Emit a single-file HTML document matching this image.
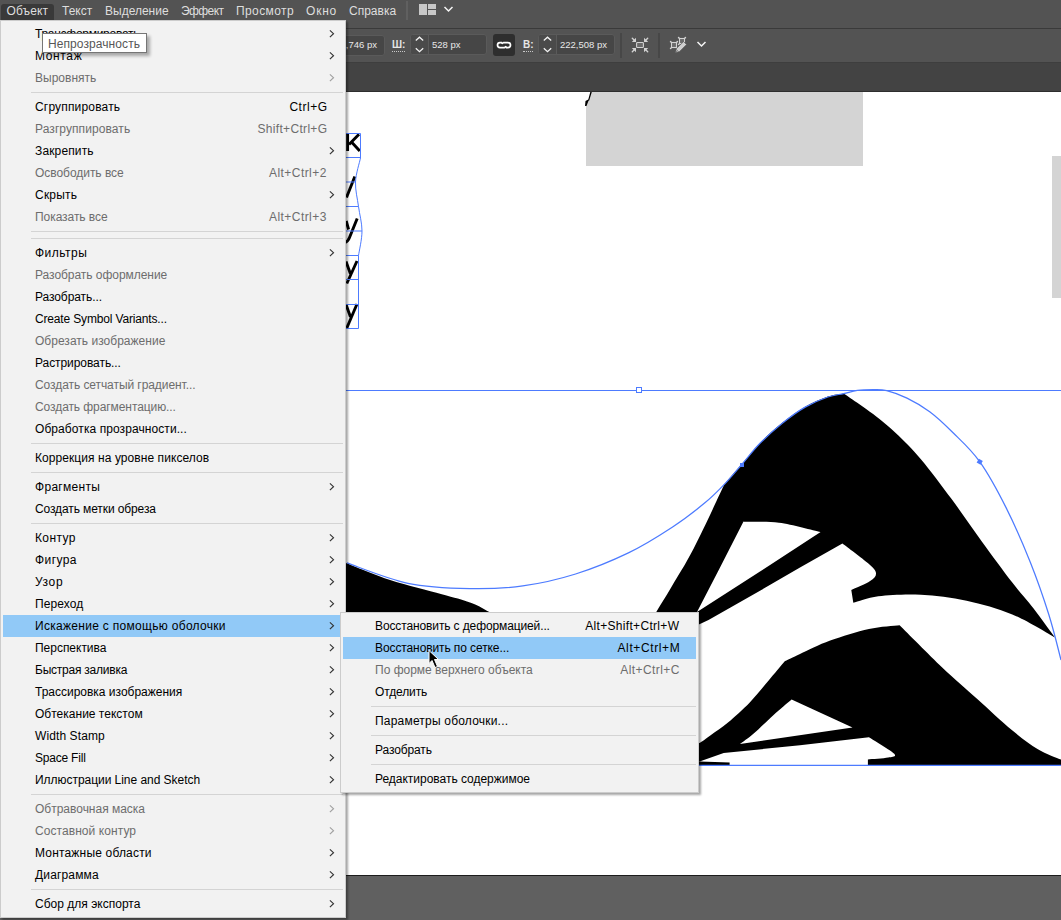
<!DOCTYPE html>
<html><head><meta charset="utf-8">
<style>
*{margin:0;padding:0;box-sizing:border-box}
html,body{width:1061px;height:920px;overflow:hidden;background:#535353;font-family:"Liberation Sans",sans-serif;font-size:12px}
.abs{position:absolute}
#menubar{left:0;top:0;width:1061px;height:28px;background:#535353}
#line1{left:0;top:28px;width:1061px;height:1px;background:#3a3a3a}
#ctrl{left:0;top:29px;width:1061px;height:33px;background:#535353}
#line2{left:0;top:62px;width:1061px;height:1px;background:#3e3e3e}
#tabs{left:0;top:63px;width:1061px;height:28px;background:#434343}
#line3{left:0;top:91px;width:1061px;height:1px;background:#2e2e2e}
#canvas{left:0;top:92px;width:1061px;height:783px;background:#fff;overflow:hidden}
#line4{left:0;top:875px;width:1061px;height:1px;background:#1c1c1c}
#bottom{left:0;top:876px;width:1061px;height:44px;background:#606060}
.mb{top:3px;height:17px;line-height:17px;color:#dedede;white-space:nowrap}
.mbsel{left:1px;top:4px;width:53px;height:16px;background:#393939;border-radius:3px 3px 0 0}
.fld{background:#464646;border:1px solid #5a5a5a;border-radius:3px}
.ftxt{color:#e8e8e8;font-size:9.5px;white-space:nowrap;line-height:12px}
.lbl{color:#e6e6e6;font-size:10px;font-weight:bold;line-height:12px;border-bottom:1px dotted #c8c8c8}
.sep{background:#474747;width:2px}
/* menus */
.menu{background:#f2f2f2;border:1px solid #cccccc;box-shadow:2px 2px 2px rgba(0,0,0,0.35)}
.it{position:absolute;left:2px;right:2px;height:22px;line-height:22px;white-space:nowrap;color:#000}
.it .t{position:absolute;left:32px;top:0}
.it .k{position:absolute;top:0}
.it.dis{color:#6d6d6d}
.it.hl{background:#91c9f7}
.arr{position:absolute;top:6px;width:7px;height:9px}
.hs{position:absolute;left:30px;right:2px;height:1px;background:#d4d4d4}
</style></head><body>
<div id="menubar" class="abs"></div>
<div id="line1" class="abs"></div>
<div id="ctrl" class="abs"></div>
<div id="line2" class="abs"></div>
<div id="tabs" class="abs"></div>
<div id="line3" class="abs"></div>
<div id="canvas" class="abs">
</div>
<svg class="abs" style="left:0;top:0" width="1061" height="920" viewBox="0 0 1061 920"><defs><clipPath id="cv"><rect x="0" y="92" width="1061" height="783"/></clipPath></defs><g clip-path="url(#cv)"><path d="M591.5 92 H863 V166 H586 V106 Z" fill="#d4d4d4"/>
<path d="M590.3 92 L591.8 92 L589.2 100.5 L588.5 100.8 L586.5 106 L585 106 L585.5 101 L588.3 99.5 Z" fill="#000"/>
<rect x="1052" y="156" width="9" height="142" fill="#d4d4d4"/>
<g fill="none" stroke="#000" stroke-width="2.9"><path d="M347.6 134 V151"/><path d="M349 144.5 L359 134.3 M351.5 142 L359.8 151"/><path d="M354.8 176.5 L346.5 197.5"/><path d="M357.2 218.5 L349.5 237.5 Q348 241.5 345 242.5"/><path d="M346.2 221 L348.6 229.5"/><path d="M357 261 L346.8 283.5"/><path d="M346 261.5 L350.5 274"/><path d="M357 304 L346.8 328"/><path d="M346 304.5 L350.5 317"/></g>
<path d="M346 133.5 H360.5 V158 C359.7 162.0 355.8 173.9 355.5 182.0 C355.2 190.1 357.4 198.3 358.5 206.5 C359.6 214.7 362.0 222.8 362.0 231.0 C362.0 239.2 359.1 251.4 358.5 255.5 V328.5 H346" fill="none" stroke="#4d7bff" stroke-width="1"/>
<line x1="346" y1="157.5" x2="360.5" y2="157.5" stroke="#4d7bff" stroke-width="1"/>
<line x1="346" y1="182" x2="355.5" y2="182" stroke="#4d7bff" stroke-width="1"/>
<line x1="346" y1="206.5" x2="358.5" y2="206.5" stroke="#4d7bff" stroke-width="1"/>
<line x1="346" y1="231" x2="362" y2="231" stroke="#4d7bff" stroke-width="1"/>
<line x1="346" y1="255.5" x2="358.5" y2="255.5" stroke="#4d7bff" stroke-width="1"/>
<line x1="346" y1="279.5" x2="358.5" y2="279.5" stroke="#4d7bff" stroke-width="1"/>
<line x1="346" y1="304.5" x2="358.5" y2="304.5" stroke="#4d7bff" stroke-width="1"/>
<path d="M724.8 483.9 C727.6 480.4 735.9 470.9 741.8 464.1 C747.7 457.3 753.2 449.8 760.0 442.9 C766.8 436.0 775.1 428.6 782.6 422.6 C790.1 416.6 797.7 411.0 805.2 406.7 C812.8 402.4 821.5 398.8 827.9 396.6 C834.3 394.4 841.1 393.9 843.7 393.4 C848.6 396.8 864.4 407.4 873.1 414.0 C881.8 420.6 887.7 425.5 895.7 433.0 C903.7 440.5 911.6 448.2 920.9 459.2 C930.2 470.2 941.2 485.1 951.4 498.8 C961.5 512.5 971.6 527.4 981.8 541.4 C991.9 555.4 1003.7 571.3 1012.3 582.5 C1020.9 593.7 1026.5 599.2 1033.6 608.4 C1040.7 617.6 1051.4 632.6 1055.0 637.5 C1047.9 633.7 1027.0 620.6 1012.3 614.5 C997.6 608.4 981.8 604.1 966.6 600.8 C951.4 597.5 935.6 595.5 920.9 594.7 C906.2 593.9 889.6 594.9 878.3 596.2 C867.0 597.6 857.5 601.7 853.3 602.8 L851.3 590.0 C854.4 588.5 866.0 583.8 870.1 581.0 C874.2 578.2 876.3 576.1 876.0 573.1 C875.7 570.1 873.7 568.2 868.1 563.2 C862.5 558.2 846.7 546.7 842.4 543.4 L800.0 567.5 L760.0 590.7 L708.5 620.0 L698.9 624.6 L640.0 660.0 L600.0 660.0 L640.0 625.0 L650.0 625.0 L656.3 611.9 C658.9 607.6 665.8 596.6 672.0 586.0 C678.2 575.4 685.0 565.4 693.8 548.3 C702.6 531.2 719.6 494.4 724.8 483.6 Z" fill="#000"/>
<path d="M742.5 521.7 C748.6 521.9 766.0 521.0 779.0 522.7 C792.0 524.4 813.7 530.5 820.6 532.0 L760.0 571.5 L697.0 611.9 L719.9 567.8 L743.5 521.4 Z" fill="#fff"/>
<path d="M785 661.1 C787.5 659.9 792.5 657.3 800.0 653.9 C807.5 650.5 818.7 644.8 830.2 640.6 C841.7 636.5 857.3 631.6 868.9 629.0 C880.5 626.4 894.5 625.8 899.6 625.2 C906.7 632.2 929.3 655.1 942.2 667.4 C955.1 679.6 965.4 688.3 977.0 698.7 C988.6 709.1 1001.6 721.6 1011.8 730.0 C1021.9 738.4 1029.7 744.3 1037.9 749.2 C1046.1 754.1 1057.2 757.9 1061.0 759.6 L1061.0 765.0 L867.9 765.0 L867.9 759.4 C871.3 759.1 883.9 758.5 888.2 757.5 C892.6 756.5 897.2 757.0 894.0 753.6 C890.8 750.2 873.1 739.9 868.9 737.2 L800.0 745.2 L723.7 753.0 L699.6 761.5 L690.0 763.0 L640.0 765.0 L640.0 740.0 L699.6 742.9 C701.5 741.9 706.3 738.5 711.0 735.0 C715.7 731.5 721.5 728.0 728.0 722.5 C734.5 717.0 743.3 709.1 750.0 702.2 C756.7 695.3 762.2 688.1 768.0 681.3 C773.8 674.4 782.2 664.5 785.0 661.1 Z" fill="#000"/>
<path d="M791.6 699.5 L852.5 727.5 L740 743.9 C742.3 742.2 748.2 738.3 753.7 733.5 C759.2 728.7 767.0 720.9 773.3 715.2 C779.6 709.5 788.5 702.1 791.6 699.5 Z" fill="#fff"/>
<path d="M690 761 L699.6 761.5 L729.6 762.6 L729.6 765 L690 765 Z" fill="#000"/>
<path d="M346 563 C353.5 565.9 374.9 575.1 390.9 580.3 C406.9 585.5 428.6 590.6 441.8 594.3 C455.0 598.0 462.1 599.5 470.0 602.5 C477.9 605.5 481.0 607.2 489.3 612.1 C497.6 617.0 514.9 628.7 520.0 632.0 L346 640 Z" fill="#000"/>
<path d="M346.8 562.9 C357.0 566.3 387.4 579.0 407.9 583.3 C428.4 587.6 450.9 588.2 470.0 588.6 C489.1 589.0 505.2 588.3 522.8 585.9 C540.4 583.5 558.0 579.5 575.6 574.0 C593.2 568.5 612.2 560.7 628.4 552.9 C644.6 545.1 659.8 535.4 672.6 527.0 C685.4 518.6 696.5 509.8 705.2 502.6 C713.9 495.4 718.7 490.2 724.8 483.9 C730.9 477.5 735.9 471.3 741.8 464.5 C747.7 457.7 753.2 450.2 760.0 443.3 C766.8 436.4 775.1 429.0 782.6 423.0 C790.1 417.0 797.7 411.4 805.2 407.1 C812.8 402.8 821.5 399.2 827.9 397.0 C834.3 394.8 838.8 394.7 843.7 393.6 C848.6 392.5 852.4 391.1 857.3 390.4 C862.2 389.7 868.2 389.6 873.1 389.6 C878.0 389.6 881.1 389.2 886.7 390.6 C892.4 392.0 899.8 394.6 907.0 398.1 C914.2 401.6 922.2 406.1 929.7 411.7 C937.2 417.3 944.0 423.7 952.3 432.0 C960.6 440.3 970.5 448.8 979.5 461.4 C988.5 474.0 997.7 491.0 1006.2 507.9 C1014.7 524.8 1023.4 544.9 1030.5 562.7 C1037.6 580.5 1043.7 598.3 1048.8 614.5 C1053.9 630.7 1059.0 652.4 1061.0 660.0" fill="none" stroke="#4d7bff" stroke-width="1.25"/>
<line x1="346" y1="390.5" x2="1061" y2="390.5" stroke="#4d7bff" stroke-width="1"/>
<line x1="690" y1="765.3" x2="1061" y2="765.3" stroke="#4d7bff" stroke-width="1.3"/>
<rect x="636.5" y="387.5" width="5" height="5" fill="#fff" stroke="#4d7bff" stroke-width="1"/>
<rect x="740" y="463" width="4" height="4" fill="#4d7bff"/>
<rect x="977.5" y="459.5" width="4.5" height="4.5" fill="#4d7bff" transform="rotate(30 979.7 461.7)"/></g></svg>
<div id="line4" class="abs"></div>
<div id="bottom" class="abs"></div>

<!-- menubar items -->
<div class="abs mbsel"></div>
<div class="abs mb" style="left:6.5px;letter-spacing:0.15px">Объект</div>
<div class="abs mb" style="left:62px">Текст</div>
<div class="abs mb" style="left:105px">Выделение</div>
<div class="abs mb" style="left:181px;letter-spacing:-0.6px">Эффект</div>
<div class="abs mb" style="left:236px;letter-spacing:0.4px">Просмотр</div>
<div class="abs mb" style="left:306px;letter-spacing:0.8px">Окно</div>
<div class="abs mb" style="left:349px">Справка</div>



<!-- control bar -->
<div class="abs fld" style="left:300px;top:35px;width:85px;height:21px"></div>
<div class="abs ftxt" style="left:300px;top:39px;width:77px;text-align:right">1034,746 px</div>
<div class="abs lbl" style="left:392px;top:39px;height:13px;width:13px">Ш:</div>
<div class="abs fld" style="left:410px;top:34px;width:77px;height:21px"></div>
<div class="abs" style="left:411px;top:35px;width:17px;height:19px;background:#4a4a4a;border-radius:2px 0 0 2px"></div>
<div class="abs" style="left:428px;top:35px;width:1px;height:19px;background:#5a5a5a"></div>
<svg class="abs" style="left:413px;top:35px" width="13" height="19" viewBox="0 0 13 19"><path d="M2.8 5.6 L6.5 2.2 L10.2 5.6 M2.8 13.3 L6.5 16.7 L10.2 13.3" fill="none" stroke="#f2f2f2" stroke-width="1.3"/></svg>
<div class="abs ftxt" style="left:432px;top:39px">528 px</div>
<div class="abs" style="left:493px;top:34px;width:22px;height:22px;background:#2e2e2e;border-radius:3px"></div>
<svg class="abs" style="left:493px;top:34px" width="22" height="22" viewBox="0 0 22 22"><path d="M9.2 8.6 H7 A2.5 2.5 0 0 0 7 13.6 H11.4 A2.5 2.5 0 0 0 13.2 12.2" fill="none" stroke="#fff" stroke-width="1.7"/><path d="M12.8 13.6 H15 A2.5 2.5 0 0 0 15 8.6 H10.6 A2.5 2.5 0 0 0 8.8 10" fill="none" stroke="#fff" stroke-width="1.7"/></svg>
<div class="abs lbl" style="left:523px;top:39px;height:13px;width:10px">В:</div>
<div class="abs fld" style="left:538px;top:34px;width:77px;height:21px"></div>
<div class="abs" style="left:539px;top:35px;width:17px;height:19px;background:#4a4a4a;border-radius:2px 0 0 2px"></div>
<div class="abs" style="left:556px;top:35px;width:1px;height:19px;background:#5a5a5a"></div>
<svg class="abs" style="left:541px;top:35px" width="13" height="19" viewBox="0 0 13 19"><path d="M2.8 5.6 L6.5 2.2 L10.2 5.6 M2.8 13.3 L6.5 16.7 L10.2 13.3" fill="none" stroke="#f2f2f2" stroke-width="1.3"/></svg>
<div class="abs ftxt" style="left:560px;top:39px">222,508 px</div>
<div class="abs sep" style="left:620px;top:33px;height:25px"></div>
<svg class="abs" style="left:628px;top:34px" width="24" height="22" viewBox="628 34 24 22"><rect x="636.6" y="42.5" width="6.8" height="5" rx="0.8" fill="#6a6a6a" stroke="#d2d2d2" stroke-width="1.1"/><g fill="#d2d2d2"><path d="M636 37.8 L636 42 L631.8 42 Z M644 37.8 L644 42 L648.2 42 Z M636 52.2 L636 48 L631.8 48 Z M644 52.2 L644 48 L648.2 48 Z"/></g><path d="M632.3 38.3 L635 41 M647.7 38.3 L645 41 M632.3 51.7 L635 49 M647.7 51.7 L645 49" stroke="#d2d2d2" stroke-width="1.4" stroke-linecap="round"/></svg>
<div class="abs sep" style="left:658px;top:33px;height:25px"></div>
<svg class="abs" style="left:666px;top:33px" width="24" height="23" viewBox="666 33 24 23"><rect x="671.5" y="42.5" width="5" height="5" fill="#6a6a6a" stroke="#d2d2d2" stroke-width="1.1"/><rect x="679.5" y="38.5" width="5" height="5" fill="#6a6a6a" stroke="#d2d2d2" stroke-width="1.1"/><g fill="#d2d2d2"><circle cx="670.7" cy="41.7" r="0.9"/><circle cx="677.3" cy="41.7" r="0.9"/><circle cx="670.7" cy="48.3" r="0.9"/><circle cx="678.7" cy="37.7" r="0.9"/><circle cx="685.3" cy="37.7" r="0.9"/><circle cx="678.7" cy="44.3" r="0.9"/></g><path d="M675.3 52.7 L676.6 48.3 L683.6 41.6 L686.6 44.6 L679.7 51.4 Z" fill="#cfcfcf" stroke="#535353" stroke-width="0.7"/><path d="M676.4 51.6 L677.6 50.4" stroke="#666" stroke-width="1"/></svg>
<svg class="abs" style="left:696px;top:40px" width="11" height="8" viewBox="0 0 11 8"><path d="M1.5 2 L5.5 6 L9.5 2" fill="none" stroke="#f5f5f5" stroke-width="1.5"/></svg>
<!-- workspace icon -->
<div class="abs" style="left:406px;top:1px;width:2px;height:19px;background:#606060"></div>
<div class="abs" style="left:419px;top:4px;width:8px;height:11px;background:#c8c8c8"></div>
<div class="abs" style="left:428px;top:4px;width:8px;height:5px;background:#c8c8c8"></div>
<div class="abs" style="left:428px;top:10px;width:8px;height:5px;background:#c8c8c8"></div>
<svg class="abs" style="left:443px;top:5px" width="11" height="8" viewBox="0 0 11 8"><path d="M1.5 2 L5.5 6 L9.5 2" fill="none" stroke="#f5f5f5" stroke-width="1.5"/></svg>

<div class="abs menu" style="left:0px;top:20px;width:346px;height:898px">
<div class="it" style="top:2px"><span class="t" style="letter-spacing:-0.27px">Трансформировать</span><svg class="arr" style="left:326px" width="7" height="9" viewBox="0 0 7 9"><path d="M0.9 1.3 L4.5 4.7 L0.9 8.1" fill="none" stroke="#333333" stroke-width="1.15"/></svg></div>
<div class="it" style="top:24px"><span class="t" style="letter-spacing:0.64px">Монтаж</span><svg class="arr" style="left:326px" width="7" height="9" viewBox="0 0 7 9"><path d="M0.9 1.3 L4.5 4.7 L0.9 8.1" fill="none" stroke="#333333" stroke-width="1.15"/></svg></div>
<div class="it dis" style="top:46px"><span class="t" style="letter-spacing:0.01px">Выровнять</span><svg class="arr" style="left:326px" width="7" height="9" viewBox="0 0 7 9"><path d="M0.9 1.3 L4.5 4.7 L0.9 8.1" fill="none" stroke="#a0a0a0" stroke-width="1.15"/></svg></div>
<div class="hs" style="top:71px"></div>
<div class="it" style="top:75px"><span class="t" style="letter-spacing:0.17px">Сгруппировать</span><span class="k" style="left:286.4px;letter-spacing:0.52px">Ctrl+G</span></div>
<div class="it dis" style="top:97px"><span class="t" style="letter-spacing:0.08px">Разгруппировать</span><span class="k" style="left:254.4px;letter-spacing:0.33px">Shift+Ctrl+G</span></div>
<div class="it" style="top:119px"><span class="t" style="letter-spacing:0.14px">Закрепить</span><svg class="arr" style="left:326px" width="7" height="9" viewBox="0 0 7 9"><path d="M0.9 1.3 L4.5 4.7 L0.9 8.1" fill="none" stroke="#333333" stroke-width="1.15"/></svg></div>
<div class="it dis" style="top:141px"><span class="t" style="letter-spacing:-0.04px">Освободить все</span><span class="k" style="left:266.0px;letter-spacing:0.44px">Alt+Ctrl+2</span></div>
<div class="it" style="top:163px"><span class="t" style="letter-spacing:0.22px">Скрыть</span><svg class="arr" style="left:326px" width="7" height="9" viewBox="0 0 7 9"><path d="M0.9 1.3 L4.5 4.7 L0.9 8.1" fill="none" stroke="#333333" stroke-width="1.15"/></svg></div>
<div class="it dis" style="top:185px"><span class="t" style="letter-spacing:-0.06px">Показать все</span><span class="k" style="left:266.0px;letter-spacing:0.44px">Alt+Ctrl+3</span></div>
<div class="hs" style="top:210px"></div>
<div class="hs" style="top:217px"></div>
<div class="it" style="top:221px"><span class="t" style="letter-spacing:0.47px">Фильтры</span><svg class="arr" style="left:326px" width="7" height="9" viewBox="0 0 7 9"><path d="M0.9 1.3 L4.5 4.7 L0.9 8.1" fill="none" stroke="#333333" stroke-width="1.15"/></svg></div>
<div class="it dis" style="top:243px"><span class="t" style="letter-spacing:-0.04px">Разобрать оформление</span></div>
<div class="it" style="top:265px"><span class="t" style="letter-spacing:-0.08px">Разобрать...</span></div>
<div class="it" style="top:287px"><span class="t" style="letter-spacing:-0.16px">Create Symbol Variants...</span></div>
<div class="it dis" style="top:309px"><span class="t" style="letter-spacing:0.02px">Обрезать изображение</span></div>
<div class="it" style="top:331px"><span class="t" style="letter-spacing:-0.07px">Растрировать...</span></div>
<div class="it dis" style="top:353px"><span class="t" style="letter-spacing:-0.07px">Создать сетчатый градиент...</span></div>
<div class="it dis" style="top:375px"><span class="t" style="letter-spacing:-0.08px">Создать фрагментацию...</span></div>
<div class="it" style="top:397px"><span class="t" style="letter-spacing:0.08px">Обработка прозрачности...</span></div>
<div class="hs" style="top:422px"></div>
<div class="it" style="top:426px"><span class="t" style="letter-spacing:0.07px">Коррекция на уровне пикселов</span></div>
<div class="hs" style="top:451px"></div>
<div class="it" style="top:455px"><span class="t" style="letter-spacing:0.29px">Фрагменты</span><svg class="arr" style="left:326px" width="7" height="9" viewBox="0 0 7 9"><path d="M0.9 1.3 L4.5 4.7 L0.9 8.1" fill="none" stroke="#333333" stroke-width="1.15"/></svg></div>
<div class="it" style="top:477px"><span class="t" style="letter-spacing:-0.11px">Создать метки обреза</span></div>
<div class="hs" style="top:502px"></div>
<div class="it" style="top:506px"><span class="t" style="letter-spacing:0.38px">Контур</span><svg class="arr" style="left:326px" width="7" height="9" viewBox="0 0 7 9"><path d="M0.9 1.3 L4.5 4.7 L0.9 8.1" fill="none" stroke="#333333" stroke-width="1.15"/></svg></div>
<div class="it" style="top:528px"><span class="t" style="letter-spacing:0.40px">Фигура</span><svg class="arr" style="left:326px" width="7" height="9" viewBox="0 0 7 9"><path d="M0.9 1.3 L4.5 4.7 L0.9 8.1" fill="none" stroke="#333333" stroke-width="1.15"/></svg></div>
<div class="it" style="top:550px"><span class="t" style="letter-spacing:0.63px">Узор</span><svg class="arr" style="left:326px" width="7" height="9" viewBox="0 0 7 9"><path d="M0.9 1.3 L4.5 4.7 L0.9 8.1" fill="none" stroke="#333333" stroke-width="1.15"/></svg></div>
<div class="it" style="top:572px"><span class="t" style="letter-spacing:0.08px">Переход</span><svg class="arr" style="left:326px" width="7" height="9" viewBox="0 0 7 9"><path d="M0.9 1.3 L4.5 4.7 L0.9 8.1" fill="none" stroke="#333333" stroke-width="1.15"/></svg></div>
<div class="it hl" style="top:594px"><span class="t" style="letter-spacing:0.30px">Искажение с помощью оболочки</span><svg class="arr" style="left:326px" width="7" height="9" viewBox="0 0 7 9"><path d="M0.9 1.3 L4.5 4.7 L0.9 8.1" fill="none" stroke="#333333" stroke-width="1.15"/></svg></div>
<div class="it" style="top:616px"><span class="t" style="letter-spacing:-0.02px">Перспектива</span><svg class="arr" style="left:326px" width="7" height="9" viewBox="0 0 7 9"><path d="M0.9 1.3 L4.5 4.7 L0.9 8.1" fill="none" stroke="#333333" stroke-width="1.15"/></svg></div>
<div class="it" style="top:638px"><span class="t" style="letter-spacing:-0.23px">Быстрая заливка</span><svg class="arr" style="left:326px" width="7" height="9" viewBox="0 0 7 9"><path d="M0.9 1.3 L4.5 4.7 L0.9 8.1" fill="none" stroke="#333333" stroke-width="1.15"/></svg></div>
<div class="it" style="top:660px"><span class="t" style="letter-spacing:-0.01px">Трассировка изображения</span><svg class="arr" style="left:326px" width="7" height="9" viewBox="0 0 7 9"><path d="M0.9 1.3 L4.5 4.7 L0.9 8.1" fill="none" stroke="#333333" stroke-width="1.15"/></svg></div>
<div class="it" style="top:682px"><span class="t" style="letter-spacing:0.01px">Обтекание текстом</span><svg class="arr" style="left:326px" width="7" height="9" viewBox="0 0 7 9"><path d="M0.9 1.3 L4.5 4.7 L0.9 8.1" fill="none" stroke="#333333" stroke-width="1.15"/></svg></div>
<div class="it" style="top:704px"><span class="t" style="letter-spacing:0.10px">Width Stamp</span><svg class="arr" style="left:326px" width="7" height="9" viewBox="0 0 7 9"><path d="M0.9 1.3 L4.5 4.7 L0.9 8.1" fill="none" stroke="#333333" stroke-width="1.15"/></svg></div>
<div class="it" style="top:726px"><span class="t" style="letter-spacing:-0.21px">Space Fill</span><svg class="arr" style="left:326px" width="7" height="9" viewBox="0 0 7 9"><path d="M0.9 1.3 L4.5 4.7 L0.9 8.1" fill="none" stroke="#333333" stroke-width="1.15"/></svg></div>
<div class="it" style="top:748px"><span class="t" style="letter-spacing:-0.04px">Иллюстрации Line and Sketch</span><svg class="arr" style="left:326px" width="7" height="9" viewBox="0 0 7 9"><path d="M0.9 1.3 L4.5 4.7 L0.9 8.1" fill="none" stroke="#333333" stroke-width="1.15"/></svg></div>
<div class="hs" style="top:773px"></div>
<div class="it dis" style="top:777px"><span class="t" style="letter-spacing:-0.01px">Обтравочная маска</span><svg class="arr" style="left:326px" width="7" height="9" viewBox="0 0 7 9"><path d="M0.9 1.3 L4.5 4.7 L0.9 8.1" fill="none" stroke="#a0a0a0" stroke-width="1.15"/></svg></div>
<div class="it dis" style="top:799px"><span class="t" style="letter-spacing:0.07px">Составной контур</span><svg class="arr" style="left:326px" width="7" height="9" viewBox="0 0 7 9"><path d="M0.9 1.3 L4.5 4.7 L0.9 8.1" fill="none" stroke="#a0a0a0" stroke-width="1.15"/></svg></div>
<div class="it" style="top:821px"><span class="t" style="letter-spacing:0.18px">Монтажные области</span><svg class="arr" style="left:326px" width="7" height="9" viewBox="0 0 7 9"><path d="M0.9 1.3 L4.5 4.7 L0.9 8.1" fill="none" stroke="#333333" stroke-width="1.15"/></svg></div>
<div class="it" style="top:843px"><span class="t" style="letter-spacing:0.15px">Диаграмма</span><svg class="arr" style="left:326px" width="7" height="9" viewBox="0 0 7 9"><path d="M0.9 1.3 L4.5 4.7 L0.9 8.1" fill="none" stroke="#333333" stroke-width="1.15"/></svg></div>
<div class="hs" style="top:868px"></div>
<div class="it" style="top:872px"><span class="t" style="letter-spacing:0.01px">Сбор для экспорта</span><svg class="arr" style="left:326px" width="7" height="9" viewBox="0 0 7 9"><path d="M0.9 1.3 L4.5 4.7 L0.9 8.1" fill="none" stroke="#333333" stroke-width="1.15"/></svg></div>
</div>
<div class="abs menu" style="left:340px;top:612px;width:359px;height:181px">
<div class="it" style="top:2px"><span class="t" style="letter-spacing:-0.12px">Восстановить с деформацией...</span><span class="k" style="left:242.2px;letter-spacing:0.32px">Alt+Shift+Ctrl+W</span></div>
<div class="it hl" style="top:24px"><span class="t" style="letter-spacing:-0.10px">Восстановить по сетке...</span><span class="k" style="left:274.5px;letter-spacing:0.61px">Alt+Ctrl+M</span></div>
<div class="it dis" style="top:46px"><span class="t" style="letter-spacing:0.00px">По форме верхнего объекта</span><span class="k" style="left:277.3px;letter-spacing:0.41px">Alt+Ctrl+C</span></div>
<div class="it" style="top:68px"><span class="t" style="letter-spacing:-0.13px">Отделить</span></div>
<div class="hs" style="top:93px"></div>
<div class="it" style="top:97px"><span class="t" style="letter-spacing:0.20px">Параметры оболочки...</span></div>
<div class="hs" style="top:122px"></div>
<div class="it" style="top:126px"><span class="t" style="letter-spacing:-0.11px">Разобрать</span></div>
<div class="hs" style="top:151px"></div>
<div class="it" style="top:155px"><span class="t" style="letter-spacing:-0.02px">Редактировать содержимое</span></div>
</div>

<div class="abs" style="left:42px;top:33px;width:105px;height:20px;background:#fff;border:1px solid #767676;box-shadow:3px 3px 3px rgba(0,0,0,0.3)"></div>
<div class="abs" style="left:48px;top:35px;height:18px;line-height:18px;color:#575757;white-space:nowrap;letter-spacing:0.08px">Непрозрачность</div>

<svg class="abs" style="left:420px;top:640px" width="30" height="35" viewBox="420 640 30 35"><path d="M429 650.5 L429 663.5 L432 660.5 L435 667.5 L437.5 666.5 L434.5 659.5 L438.5 659.5 Z" fill="#000" stroke="#fff" stroke-width="1"/></svg>
</body></html>
